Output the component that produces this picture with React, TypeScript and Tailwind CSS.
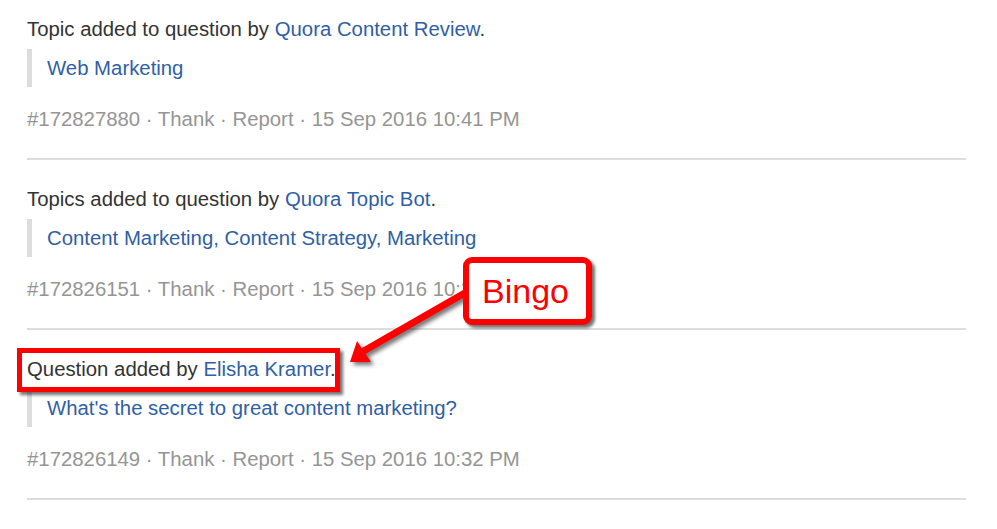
import React from "react";

type Item = {
  pre: string;
  by: string;
  topics: string[];
  id: string;
  time: string;
  highlight?: boolean;
};

const items: Item[] = [
  {
    pre: "Topic added to question by ",
    by: "Quora Content Review",
    topics: ["Web Marketing"],
    id: "#172827880",
    time: "15 Sep 2016 10:41 PM",
  },
  {
    pre: "Topics added to question by ",
    by: "Quora Topic Bot",
    topics: ["Content Marketing", "Content Strategy", "Marketing"],
    id: "#172826151",
    time: "15 Sep 2016 10:32 PM",
  },
  {
    pre: "Question added by ",
    by: "Elisha Kramer",
    topics: ["What's the secret to great content marketing?"],
    id: "#172826149",
    time: "15 Sep 2016 10:32 PM",
    highlight: true,
  },
];

export default function App() {
  return (
    <div
      className="relative w-[997px] h-[529px] bg-white overflow-hidden"
      style={{ fontFamily: '"Liberation Sans", Arial, sans-serif' }}
    >
      <div className="pl-[27px] pt-[17px] w-[966px] flex flex-col">
        {items.map((it, i) => (
          <div key={i} className={i > 0 ? "pt-[27px]" : ""}>
            <div className="relative text-[20.35px] leading-[24px] text-[#333333] whitespace-nowrap">
              {it.pre}
              <span className="text-[#2f5fa5]">{it.by}</span>.
              {it.highlight && (
                <div className="absolute left-[-10px] top-[-9px] w-[323px] h-[44px] border-[5px] border-[#ff0000] shadow-[3px_3px_3px_rgba(0,0,0,0.55)]" />
              )}
            </div>
            <div className="mt-[8px] h-[38px] border-l-[5px] border-[#dddddd] pl-[15px] text-[20.35px] leading-[38px] text-[#2f5fa5] whitespace-nowrap">
              {it.topics.map((t, j) => (
                <React.Fragment key={j}>
                  {j > 0 && ", "}
                  <span>{t}</span>
                </React.Fragment>
              ))}
            </div>
            <div className="mt-[20px] text-[20.35px] leading-[24px] text-[#959595] whitespace-nowrap">
              {it.id} · Thank · Report · {it.time}
            </div>
            <div className="mt-[27px] h-[2px] bg-[#dddddd]" />
          </div>
        ))}
      </div>

      <svg
        className="absolute left-0 top-0 pointer-events-none"
        width={997}
        height={529}
        viewBox="0 0 997 529"
        style={{ filter: "drop-shadow(3px 3px 2px rgba(0,0,0,0.55))" }}
      >
        <line x1={470} y1={290} x2={362} y2={352} stroke="#ff0000" strokeWidth={7} />
        <polygon points="350,362 357,341 371,362" fill="#ff0000" />
      </svg>

      <div className="absolute left-[463px] top-[257px] w-[129px] h-[68px] rounded-[9px] border-[6px] border-[#ff0000] bg-white shadow-[3px_3px_3px_rgba(0,0,0,0.55)] flex items-center justify-center">
        <span className="text-[34px] leading-none text-[#ff0000] pr-[4px]">Bingo</span>
      </div>
    </div>
  );
}
